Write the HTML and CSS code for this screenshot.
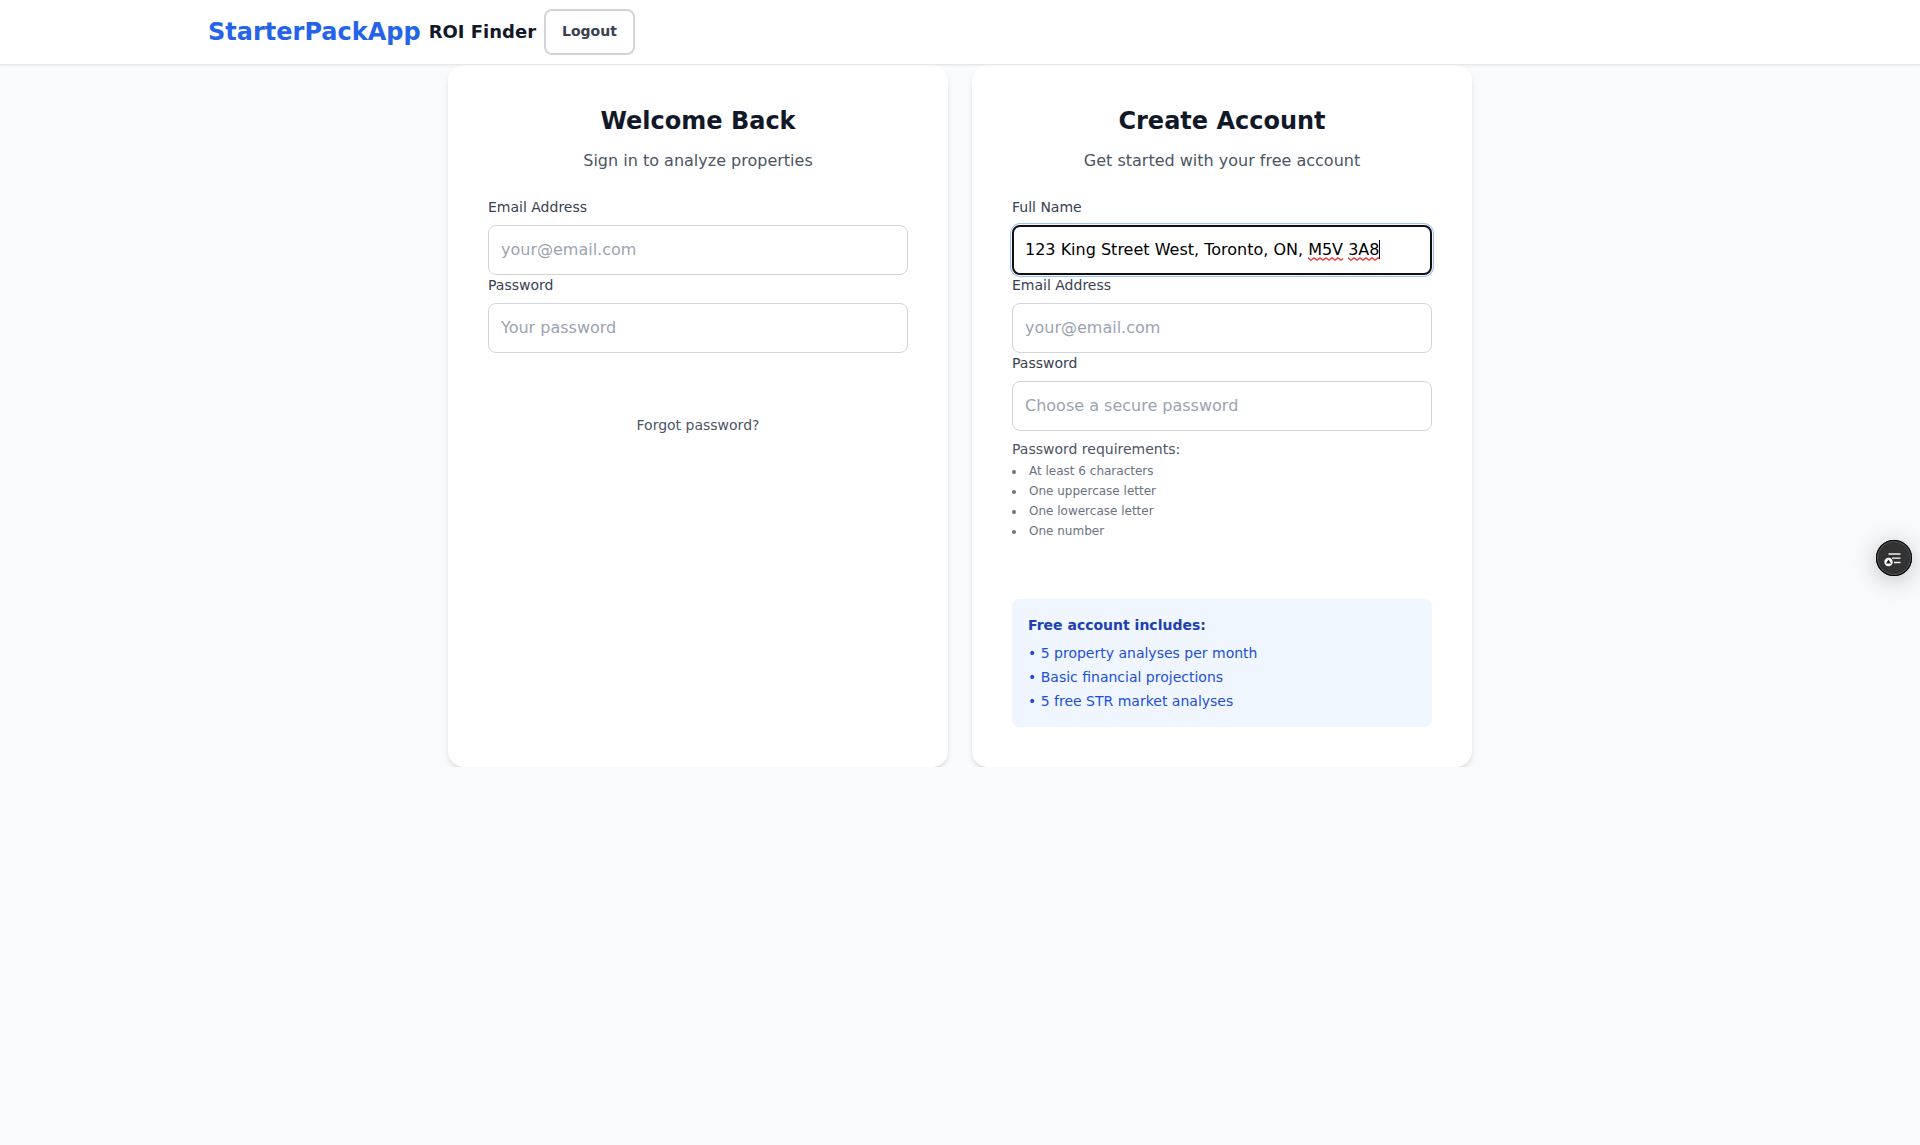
FILE: index.html
```html
<!DOCTYPE html>
<html lang="en">
<head>
<meta charset="utf-8">
<title>StarterPackApp ROI Finder</title>
<link rel="stylesheet" href="styles.css">
</head>
<body>
<header class="header">
  <nav class="nav">
    <a class="brand">StarterPackApp</a>
    <span class="product">ROI Finder</span>
    <button class="logout" type="button">Logout</button>
  </nav>
</header>
<main class="auth">
  <section class="card">
    <h2 class="title">Welcome Back</h2>
    <p class="subtitle">Sign in to analyze properties</p>
    <form>
      <label class="label" for="login-email">Email Address</label>
      <input class="input" id="login-email" type="email" placeholder="your@email.com">
      <label class="label" for="login-password">Password</label>
      <input class="input" id="login-password" type="password" placeholder="Your password">
    </form>
    <a class="forgot">Forgot password?</a>
  </section>
  <section class="card">
    <h2 class="title">Create Account</h2>
    <p class="subtitle">Get started with your free account</p>
    <form>
      <div class="label">Full Name</div>
      <div class="input input-focused">123 King Street West, Toronto, ON, <span class="misspelled">M5V</span> <span class="misspelled">3A8</span><span class="caret"></span></div>
      <label class="label" for="signup-email">Email Address</label>
      <input class="input" id="signup-email" type="email" placeholder="your@email.com">
      <label class="label" for="signup-password">Password</label>
      <input class="input" id="signup-password" type="password" placeholder="Choose a secure password">
    </form>
    <p class="rules-title">Password requirements:</p>
    <ul class="rules">
      <li>At least 6 characters</li>
      <li>One uppercase letter</li>
      <li>One lowercase letter</li>
      <li>One number</li>
    </ul>
    <div class="perks">
      <h3 class="perks-title">Free account includes:</h3>
      <ul class="perks-list">
        <li>• 5 property analyses per month</li>
        <li>• Basic financial projections</li>
        <li>• 5 free STR market analyses</li>
      </ul>
    </div>
  </section>
</main>
<button class="fab" type="button" aria-label="Open assistant">
  <svg width="36" height="36" viewBox="0 0 36 36">
    <path d="M12.5 14H24.5" stroke="#e6e6e6" stroke-width="1.6"/>
    <path d="M16 18.2H24.5" stroke="#d0d0d0" stroke-width="1.6"/>
    <path d="M18 22.5H24.5" stroke="#fff" stroke-width="1.4"/>
    <circle cx="12.5" cy="22" r="4.2" fill="#fff"/>
    <path d="M12.5 19.4L15 23.4H10Z" fill="#222"/>
  </svg>
</button>
</body>
</html>
```
FILE: styles.css
```css
* {
  box-sizing: border-box;
  margin: 0;
  padding: 0;
}

body {
  min-height: 100vh;
  background: #f9fafb;
  color: #111827;
  font: 16px/24px "DejaVu Sans", sans-serif;
}

ul {
  list-style: none;
}

.header {
  position: relative;
  z-index: 1;
  background: #fff;
  border-bottom: 1px solid #e5e7eb;
  box-shadow: 0 1px 2px rgba(0, 0, 0, 0.05);
}

.nav {
  display: flex;
  align-items: center;
  gap: 8px;
  width: 1536px;
  height: 64px;
  margin: 0 auto;
  padding: 0 16px;
}

.brand {
  color: #2563eb;
  font-size: 24px;
  font-weight: 700;
}

.product {
  font-size: 18px;
  font-weight: 600;
}

.logout {
  height: 46px;
  padding: 0 16px 2px;
  background: #fff;
  border: 2px solid #d1d5db;
  border-radius: 8px;
  color: #374151;
  font: 600 14px/20px "DejaVu Sans", sans-serif;
}

.auth {
  display: grid;
  grid-template-columns: 500px 500px;
  justify-content: center;
  gap: 24px;
  height: 702px;
  overflow: hidden;
}

.card {
  padding: 40px;
  background: #fff;
  border-radius: 16px;
  box-shadow: 0 4px 6px -1px rgba(0, 0, 0, 0.1), 0 2px 4px -2px rgba(0, 0, 0, 0.1);
}

.title {
  margin-bottom: 12px;
  font-size: 24px;
  font-weight: 700;
  line-height: 32px;
  text-align: center;
}

.subtitle {
  margin-bottom: 24px;
  color: #4b5563;
  text-align: center;
}

.label {
  display: block;
  margin-bottom: 8px;
  color: #374151;
  font-size: 14px;
  line-height: 20px;
}

.input {
  display: block;
  width: 100%;
  height: 50px;
  padding: 11px 12px 13px;
  background: #fff;
  border: 1px solid #d1d5db;
  border-radius: 8px;
  color: #000;
  font: 16px/24px "DejaVu Sans", sans-serif;
}

.input::placeholder {
  color: #9ca3af;
}

.input-focused {
  padding: 11px;
  border: 2px solid #101010;
  box-shadow: 0 0 0 1px #f0f5ff, 0 0 0 2px #9dbffb;
}

.misspelled {
  padding-bottom: 2px;
  background: url("data:image/svg+xml,%3Csvg xmlns='http://www.w3.org/2000/svg' width='6' height='4'%3E%3Cpath d='M-1.5 2L0 .8L3 3.2L6 .8L7.5 2' fill='none' stroke='%23f33' stroke-width='1.3'/%3E%3C/svg%3E") left bottom repeat-x;
}

.caret {
  display: inline-block;
  width: 1px;
  height: 19px;
  background: #000;
  vertical-align: -4px;
}

.forgot {
  display: block;
  margin-top: 62px;
  color: #4b5563;
  font-size: 14px;
  line-height: 20px;
  text-align: center;
}

.rules-title {
  margin: 8px 0 4px;
  color: #4b5563;
  font-size: 14px;
  line-height: 20px;
}

.rules {
  display: grid;
  gap: 4px;
  color: #6b7280;
  font-size: 12px;
  line-height: 16px;
  list-style: disc inside;
}

.perks {
  margin-top: 60px;
  padding: 16px;
  background: #eff6ff;
  border-radius: 8px;
  font-size: 14px;
  line-height: 20px;
}

.perks-title {
  margin-bottom: 8px;
  color: #1e40af;
  font-size: 14px;
  font-weight: 600;
}

.perks-list {
  display: grid;
  gap: 4px;
  color: #1d4ed8;
}

.fab {
  position: fixed;
  top: 540px;
  left: 1876px;
  width: 36px;
  height: 36px;
  background: #333;
  border: 0;
  border-radius: 50%;
  box-shadow: inset 0 0 0 1px #000, inset 0 0 0 2px #555, 0 4px 24px rgba(0, 0, 0, 0.24);
}

.fab svg {
  display: block;
}
```
